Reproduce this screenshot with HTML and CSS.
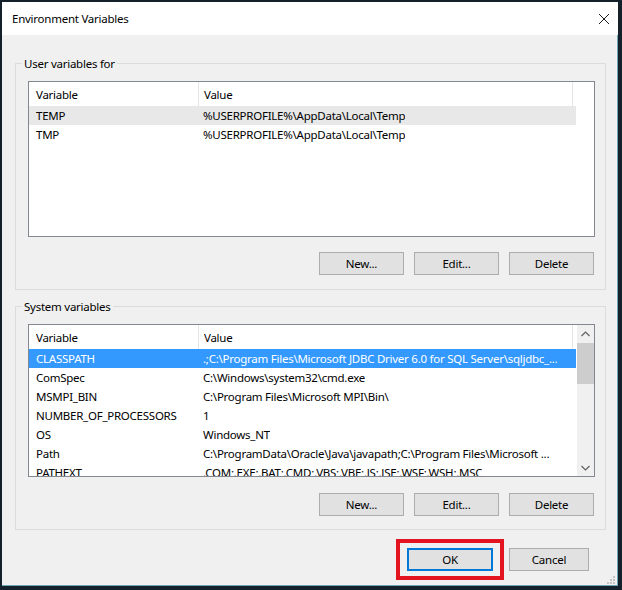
FILE: index.html
```html
<!DOCTYPE html>
<html lang="en">
<head>
    <meta charset="UTF-8">
    <meta name="viewport" content="width=device-width, initial-scale=1.0">
    <title>Environment Variables</title>
    <link rel="stylesheet" href="styles.css">
</head>
<body>
    <div class="window">
        <div class="titlebar">
            <span class="title">Environment Variables</span>
            <svg class="close" width="12" height="12" viewBox="0 0 12 12">
                <path d="M1 1 L11 11 M11 1 L1 11" stroke="#1a1a1a" stroke-width="1" fill="none"/>
            </svg>
        </div>

        <div class="content">
            <fieldset class="group group-user">
                <legend>User variables for</legend>
                <div class="listbox listbox-user">
                    <div class="list-main">
                        <div class="list-head">
                            <span class="col-var">Variable</span>
                            <span class="col-val">Value</span>
                        </div>
                        <div class="row row-inactive">
                            <span class="col-var">TEMP</span>
                            <span class="col-val">%USERPROFILE%\AppData\Local\Temp</span>
                        </div>
                        <div class="row">
                            <span class="col-var">TMP</span>
                            <span class="col-val">%USERPROFILE%\AppData\Local\Temp</span>
                        </div>
                    </div>
                </div>
                <div class="buttons">
                    <button class="btn">New...</button>
                    <button class="btn">Edit...</button>
                    <button class="btn">Delete</button>
                </div>
            </fieldset>

            <fieldset class="group group-system">
                <legend>System variables</legend>
                <div class="listbox listbox-system">
                    <div class="list-main">
                        <div class="list-head">
                            <span class="col-var">Variable</span>
                            <span class="col-val">Value</span>
                        </div>
                        <div class="row row-selected">
                            <span class="col-var">CLASSPATH</span>
                            <span class="col-val">.;C:\Program Files\Microsoft JDBC Driver 6.0 for SQL Server\sqljdbc_...</span>
                        </div>
                        <div class="row">
                            <span class="col-var">ComSpec</span>
                            <span class="col-val">C:\Windows\system32\cmd.exe</span>
                        </div>
                        <div class="row">
                            <span class="col-var">MSMPI_BIN</span>
                            <span class="col-val">C:\Program Files\Microsoft MPI\Bin\</span>
                        </div>
                        <div class="row">
                            <span class="col-var">NUMBER_OF_PROCESSORS</span>
                            <span class="col-val">1</span>
                        </div>
                        <div class="row">
                            <span class="col-var">OS</span>
                            <span class="col-val">Windows_NT</span>
                        </div>
                        <div class="row">
                            <span class="col-var">Path</span>
                            <span class="col-val">C:\ProgramData\Oracle\Java\javapath;C:\Program Files\Microsoft ...</span>
                        </div>
                        <div class="row">
                            <span class="col-var">PATHEXT</span>
                            <span class="col-val">.COM;.EXE;.BAT;.CMD;.VBS;.VBE;.JS;.JSE;.WSF;.WSH;.MSC</span>
                        </div>
                    </div>
                    <div class="scrollbar">
                        <div class="arrow">
                            <svg width="9" height="6" viewBox="0 0 9 6"><path d="M0.5 5 L4.5 1 L8.5 5" stroke="#606060" stroke-width="1.2" fill="none"/></svg>
                        </div>
                        <div class="track">
                            <div class="thumb"></div>
                        </div>
                        <div class="arrow">
                            <svg width="9" height="6" viewBox="0 0 9 6"><path d="M0.5 1 L4.5 5 L8.5 1" stroke="#606060" stroke-width="1.2" fill="none"/></svg>
                        </div>
                    </div>
                </div>
                <div class="buttons">
                    <button class="btn">New...</button>
                    <button class="btn">Edit...</button>
                    <button class="btn">Delete</button>
                </div>
            </fieldset>

            <div class="footer">
                <span class="highlight">
                    <button class="btn btn-default">OK</button>
                </span>
                <button class="btn btn-cancel">Cancel</button>
            </div>
        </div>

        <svg class="grip" width="8" height="8" viewBox="0 0 8 8">
            <rect x="6" y="0" width="2" height="2" fill="#c4c4c4"/>
            <rect x="3" y="3" width="2" height="2" fill="#c4c4c4"/>
            <rect x="6" y="3" width="2" height="2" fill="#c4c4c4"/>
            <rect x="0" y="6" width="2" height="2" fill="#c4c4c4"/>
            <rect x="3" y="6" width="2" height="2" fill="#c4c4c4"/>
            <rect x="6" y="6" width="2" height="2" fill="#c4c4c4"/>
        </svg>
    </div>
</body>
</html>
```

FILE: styles.css
```css
html, body {
    margin: 0;
    background-color: #14212b;
}

body {
    font-family: 'Noto Sans', sans-serif;
    font-size: 11.5px;
    letter-spacing: -0.25px;
    color: #000000;
}

.window {
    position: relative;
    width: 622px;
    height: 590px;
    box-sizing: border-box;
    border-style: solid;
    border-color: #14212b;
    border-width: 2px 4px 4px 2px;
    background-color: #f0f0f0;
    box-shadow: inset -1px -1px 0 #6fa6b8;
    display: flex;
    flex-direction: column;
}

.titlebar {
    height: 33px;
    flex-shrink: 0;
    background-color: #ffffff;
    display: flex;
    align-items: center;
    padding-left: 10px;
}

.title {
    line-height: 16px;
}

.close {
    margin-left: auto;
    margin-right: 8px;
}

.content {
    flex: 1;
    padding: 0 12px 0 13px;
}

.group {
    margin: 0;
    border: 1px solid #dcdcdc;
    padding: 10px 10px 14px 6px;
}

.group legend {
    padding: 0 2px;
    line-height: 16px;
    position: relative;
    top: 1px;
}

.group-user {
    margin-top: 20px;
}

.group-system {
    margin-top: 8px;
    padding-bottom: 13px;
}

.listbox {
    margin-left: 6px;
    border: 1px solid #828790;
    background-color: #ffffff;
    display: flex;
    overflow: hidden;
}

.listbox-user {
    height: 154px;
}

.listbox-system {
    height: 151px;
}

.list-main {
    width: 547px;
    flex-shrink: 0;
}

.list-head {
    display: flex;
    height: 24px;
    align-items: stretch;
}

.list-head span {
    display: flex;
    align-items: center;
}

.list-head .col-var {
    border-right: 1px solid #e5e5e5;
}

.list-head .col-val {
    width: 368px;
    border-right: 1px solid #e5e5e5;
}

.row {
    display: flex;
    height: 19px;
    line-height: 19px;
    white-space: nowrap;
}

.col-var {
    width: 162px;
    padding-left: 7px;
    flex-shrink: 0;
}

.col-val {
    padding-left: 5px;
    overflow: hidden;
}

.row-inactive {
    background-color: #e8e8e8;
}

.row-selected {
    background-color: #3399ff;
    color: #ffffff;
}

.scrollbar {
    width: 17px;
    margin-left: 1px;
    background-color: #f0f0f0;
    display: flex;
    flex-direction: column;
}

.arrow {
    height: 17px;
    display: flex;
    align-items: center;
    justify-content: center;
}

.track {
    flex: 1;
    padding-top: 1px;
}

.thumb {
    height: 41px;
    background-color: #cdcdcd;
}

.buttons {
    display: flex;
    justify-content: flex-end;
    gap: 10px;
    margin-top: 15px;
    padding-right: 1px;
}

.group-system .buttons {
    margin-top: 16px;
}

.btn {
    width: 85px;
    height: 23px;
    box-sizing: border-box;
    background-color: #e1e1e1;
    border: 1px solid #adadad;
    font-family: 'Noto Sans', sans-serif;
    font-size: 11.5px;
    letter-spacing: -0.25px;
    color: #000000;
    padding: 0;
}

.footer {
    display: flex;
    justify-content: flex-end;
    align-items: center;
    margin-top: 9px;
    margin-right: 17px;
}

.highlight {
    display: flex;
    border: 4px solid #e3141f;
    padding: 5px 7px;
}

.btn-default {
    width: 86px;
    border: 1px solid #0078d7;
    box-shadow: inset 0 0 0 1px #0078d7;
}

.btn-cancel {
    width: 80px;
    margin-left: 5px;
}

.grip {
    position: absolute;
    right: 3px;
    bottom: 2px;
}
```
